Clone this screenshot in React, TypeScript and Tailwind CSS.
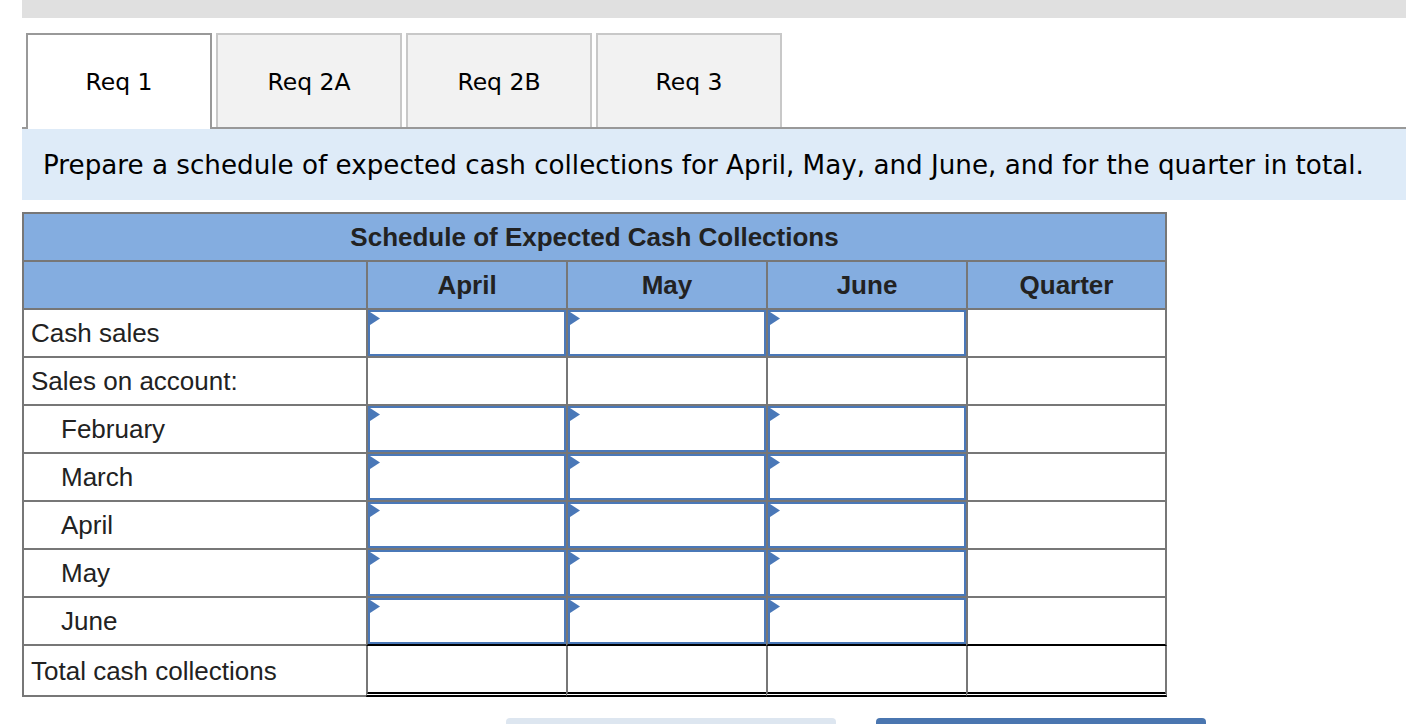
const TABS = ["Req 1", "Req 2A", "Req 2B", "Req 3"];

const ROWS = [
  { label: "Cash sales", indent: false, input: true },
  { label: "Sales on account:", indent: false, input: false },
  { label: "February", indent: true, input: true },
  { label: "March", indent: true, input: true },
  { label: "April", indent: true, input: true },
  { label: "May", indent: true, input: true },
  { label: "June", indent: true, input: true },
];

const MONTHS = ["April", "May", "June"];

function InputBox() {
  return (
    <div className="relative h-full w-full border-2 border-[#4a78b8] bg-white">
      <svg className="absolute left-0 top-0" width="10" height="13" viewBox="0 0 10 13">
        <polygon points="0,0 10,6.5 0,13" fill="#4a78b8" />
      </svg>
    </div>
  );
}

export default function App() {
  return (
    <div className="min-h-screen bg-white pl-[22px]">
      {/* top strip */}
      <div className="h-[18px] bg-[#e0e0e0]" />

      {/* tabs */}
      <div
        className="mt-[15px] flex gap-1 border-b-2 border-[#999] pl-1 h-[96px]"
        style={{ fontFamily: '"DejaVu Sans", Verdana, sans-serif' }}
      >
        {TABS.map((t, i) =>
          i === 0 ? (
            <div
              key={t}
              className="relative z-10 flex h-[96px] w-[186px] items-center justify-center border-2 border-b-0 border-[#999] bg-white pt-[2px] text-[23.5px] text-black"
            >
              {t}
            </div>
          ) : (
            <div
              key={t}
              className="flex h-[94px] w-[186px] items-center justify-center border-2 border-b-0 border-[#c8c8c8] bg-[#f2f2f2] pt-[4px] text-[23.5px] text-black"
            >
              {t}
            </div>
          )
        )}
      </div>

      {/* instruction */}
      <div
        className="flex h-[71px] items-center bg-[#deebf8] pl-[21px] pt-[3px] text-[26.2px] text-black"
        style={{ fontFamily: '"DejaVu Sans", Verdana, sans-serif' }}
      >
        Prepare a schedule of expected cash collections for April, May, and June, and for the quarter in total.
      </div>

      {/* schedule table */}
      <div
        className="mt-[12px] w-[1145px] text-[#222]"
        style={{ fontFamily: '"Liberation Sans", Arial, sans-serif' }}
      >
        <div className="flex h-[50px] items-center justify-center border-2 border-[#777] bg-[#84ade0] text-[26px] font-bold">
          Schedule of Expected Cash Collections
        </div>

        <div className="flex h-[48px] bg-[#84ade0] text-[26px] font-bold">
          <div className="w-[344px] border-b-2 border-l-2 border-[#777]" />
          {MONTHS.map((m) => (
            <div key={m} className="flex w-[200px] items-center justify-center border-b-2 border-l-2 border-[#777]">
              {m}
            </div>
          ))}
          <div className="flex w-[201px] items-center justify-center border-b-2 border-l-2 border-r-2 border-[#777]">
            Quarter
          </div>
        </div>

        {ROWS.map((r, idx) => {
          const last = idx === ROWS.length - 1;
          const bottom = last ? "border-b-black" : "border-b-[#777]";
          return (
            <div key={r.label} className="flex h-[48px] text-[26px]">
              <div
                className={`flex w-[344px] items-center border-b-2 border-l-2 border-[#777] ${
                  r.indent ? "pl-[37px]" : "pl-[7px]"
                }`}
              >
                {r.label}
              </div>
              {MONTHS.map((m) => (
                <div key={m} className={`w-[200px] border-b-2 border-l-2 border-[#777] ${bottom}`}>
                  {r.input && <InputBox />}
                </div>
              ))}
              <div className={`w-[201px] border-b-2 border-l-2 border-r-2 border-[#777] ${bottom}`} />
            </div>
          );
        })}

        <div className="flex h-[51px] text-[26px]">
          <div className="flex w-[344px] items-center border-b-2 border-l-2 border-[#777] pl-[7px] pt-[2px]">
            Total cash collections
          </div>
          {MONTHS.map((m) => (
            <div key={m} className="w-[200px] border-b-[5px] border-l-2 border-double border-[#777] border-b-black" />
          ))}
          <div className="w-[201px] border-b-[5px] border-l-2 border-r-2 border-double border-[#777] border-b-black" />
        </div>
      </div>

      {/* buttons */}
      <div className="mt-[21px] flex gap-[40px] pl-[484px]">
        <div className="h-[30px] w-[330px] rounded-[4px] bg-[#dde6f0]" />
        <div className="h-[30px] w-[330px] rounded-[4px] bg-[#4a76b0]" />
      </div>
    </div>
  );
}
